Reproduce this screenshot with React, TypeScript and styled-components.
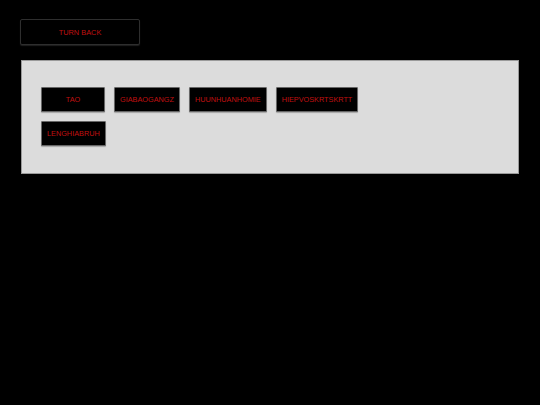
import React from "react";
import styled, { createGlobalStyle } from "styled-components";

const Global = createGlobalStyle`
  html, body { margin: 0; padding: 0; background: #000; }
  body { font-family: "Liberation Sans", Arial, sans-serif; }
`;

const Page = styled.div`
  width: 540px;
  height: 405px;
  box-sizing: border-box;
  padding: 19px 21px 0 20px;
  display: flex;
  flex-direction: column;
  align-items: flex-start;
  gap: 15px;
  background: #000;
`;

const BackButton = styled.button`
  width: 120px;
  height: 26px;
  background: #000;
  border: 1px solid #2e2e2e;
  border-radius: 2px;
  box-shadow: 0 1px 1px rgba(80, 80, 80, 0.4);
  color: #c01010;
  font-family: "Liberation Sans", Arial, sans-serif;
  font-size: 7.4px;
  padding: 0;
  cursor: pointer;
`;

const Panel = styled.div`
  align-self: stretch;
  margin-left: 1px;
  height: 114px;
  box-sizing: border-box;
  background: #dcdcdc;
  border: 1px solid #9a9a9a;
  padding: 26px 19px;
`;

const ChipGrid = styled.div`
  max-width: 330px;
  display: flex;
  flex-wrap: wrap;
  align-content: flex-start;
  gap: 9px;
`;

const Chip = styled.button`
  min-width: 64px;
  height: 25px;
  box-sizing: border-box;
  padding: 0 5px;
  background: #000;
  border: 1px solid #666;
  border-radius: 1px;
  box-shadow: 0 1px 1px rgba(0, 0, 0, 0.25);
  color: #c01010;
  font-family: "Liberation Sans", Arial, sans-serif;
  font-size: 7.3px;
  cursor: pointer;
`;

const names = ["TAO", "GIABAOGANGZ", "HUUNHUANHOMIE", "HIEPVOSKRTSKRTT", "LENGHIABRUH"];

export default function App() {
  return (
    <>
      <Global />
      <Page>
        <BackButton>TURN BACK</BackButton>
        <Panel>
          <ChipGrid>
            {names.map((n) => (
              <Chip key={n}>{n}</Chip>
            ))}
          </ChipGrid>
        </Panel>
      </Page>
    </>
  );
}
